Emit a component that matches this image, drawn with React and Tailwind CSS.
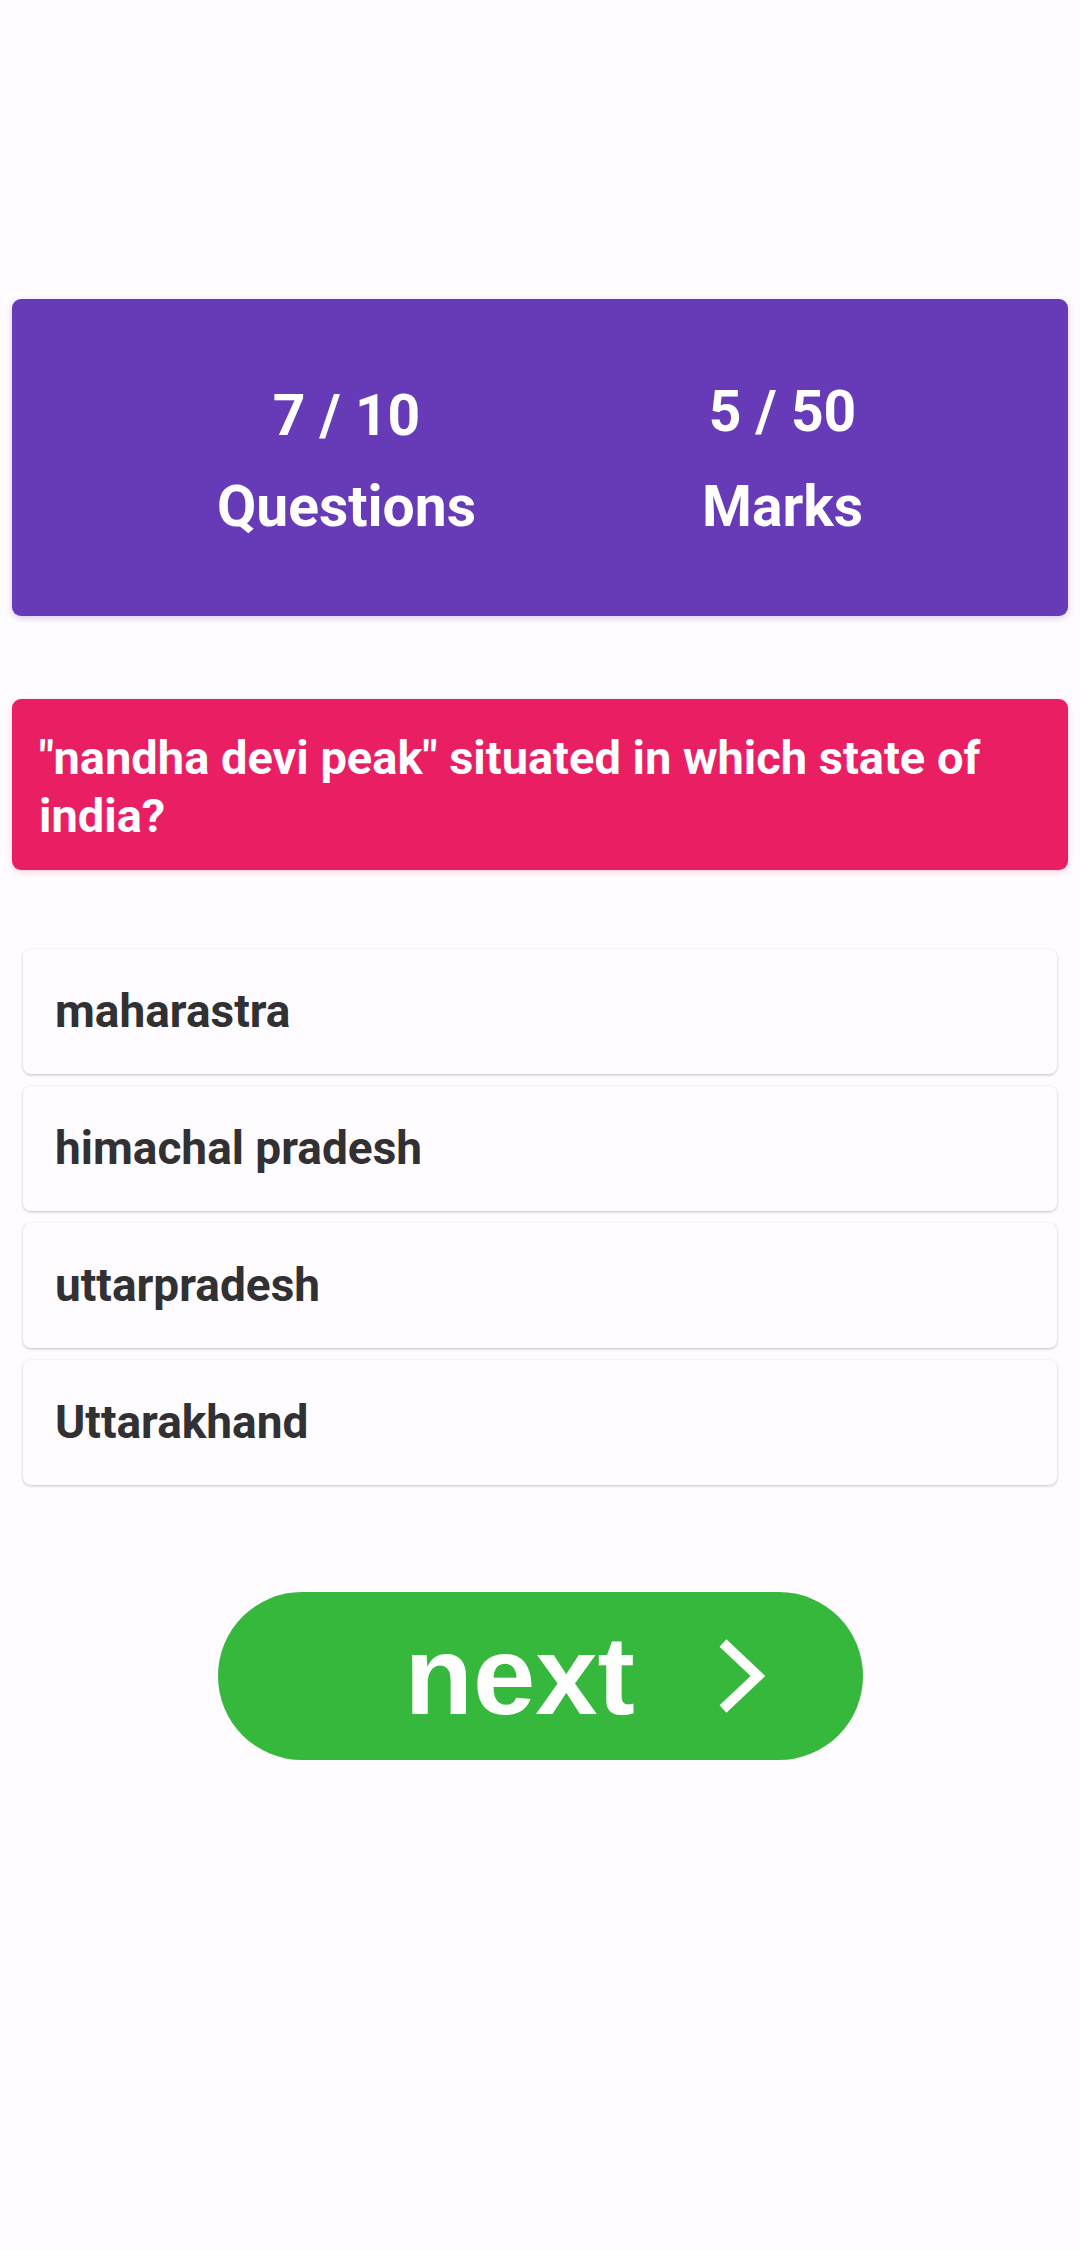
import { useState } from "react";

const options = ["maharastra", "himachal pradesh", "uttarpradesh", "Uttarakhand"];

function Chevron() {
  return (
    <svg width="48" height="74" viewBox="0 0 48 74" fill="none">
      <path
        d="M6 4 L41 37 L6 70"
        stroke="white"
        strokeWidth="10"
        strokeLinejoin="miter"
        strokeLinecap="butt"
      />
    </svg>
  );
}

function Stat({ value, label, raised }) {
  return (
    <div className="flex flex-col items-center">
      <div className={"text-[57px] leading-[64px] font-bold " + (raised ? "-mt-[4px] mb-[4px]" : "")}>
        {value}
      </div>
      <div className="mt-[27px] text-[57px] leading-[64px] font-bold">{label}</div>
    </div>
  );
}

export default function App() {
  const [selected, setSelected] = useState(null);

  return (
    <div
      className="min-h-[2250px] w-full bg-[#fefcff] px-[12px] pt-[299px]"
      style={{ fontFamily: "Roboto, 'Noto Sans', sans-serif" }}
    >
      {/* score card */}
      <div className="flex h-[317px] justify-center gap-[226px] rounded-[9px] bg-[#673ab7] pt-[85px] text-white shadow-[0_2px_6px_rgba(103,58,183,0.25)]">
        <Stat value="7 / 10" label="Questions" />
        <Stat value="5 / 50" label="Marks" raised />
      </div>

      {/* question */}
      <div className="mt-[83px] h-[171px] rounded-[9px] bg-[#e91e63] pl-[27px] pr-[20px] pt-[30px] text-[47px] leading-[58px] font-bold text-white shadow-[0_2px_6px_rgba(233,30,99,0.2)]">
        "nandha devi peak" situated in which state of india?
      </div>

      {/* options */}
      <div className="mx-[11px] mt-[79px] flex flex-col gap-3">
        {options.map((opt, i) => (
          <button
            key={opt}
            onClick={() => setSelected(i)}
            className={
              "flex h-[125px] items-center rounded-[8px] pl-[32px] text-left text-[46px] font-bold text-[#313033] shadow-[0_1px_3px_rgba(0,0,0,0.24)] " +
              (selected === i ? "bg-[#f3eefc]" : "bg-[#fffcff]")
            }
          >
            {opt}
          </button>
        ))}
      </div>

      {/* next button */}
      <div className="mt-[107px] flex justify-center">
        <button className="flex h-[168px] w-[645px] items-center rounded-full bg-[#36b83d] pl-[187px]">
          <span
            className="text-[112px] leading-none font-bold text-white"
            style={{ fontFamily: "'Liberation Sans', Arial, sans-serif" }}
          >
            next
          </span>
          <span className="ml-[82px] flex items-center">
            <Chevron />
          </span>
        </button>
      </div>
    </div>
  );
}
